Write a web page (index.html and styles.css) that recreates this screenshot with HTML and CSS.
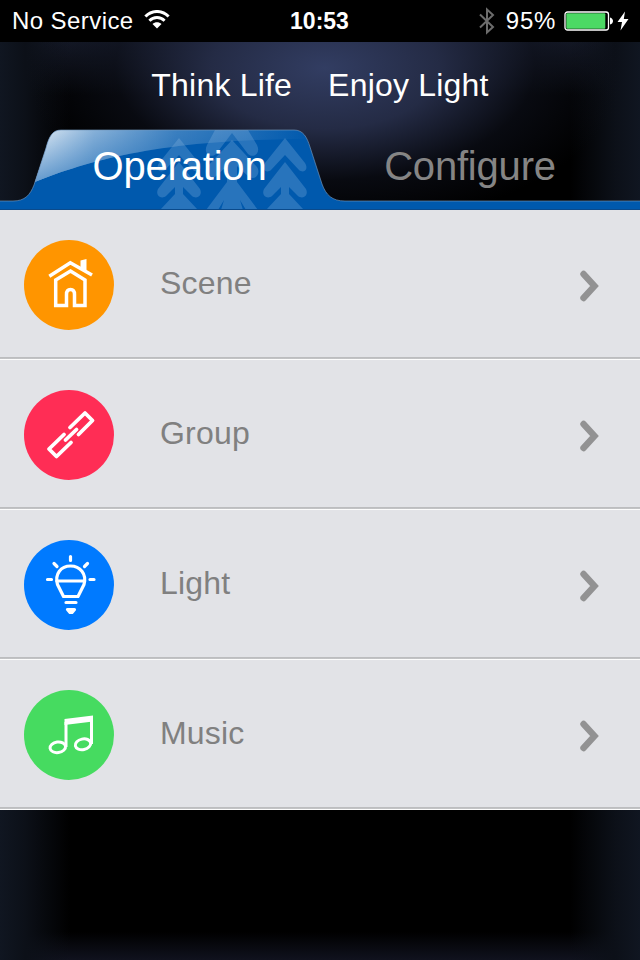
FILE: index.html
```
<!DOCTYPE html>
<html lang="en">
<head>
  <meta charset="UTF-8">
  <meta name="viewport" content="width=device-width, initial-scale=1.0">
  <title>Think Life Enjoy Light</title>
  <link rel="stylesheet" href="styles.css">
</head>
<body>

  <!-- Status bar -->
  <div class="status-bar">
    <div class="status-left">
      <span class="carrier">No Service</span>
      <svg class="wifi" width="26" height="20" viewBox="0 0 26 20">
        <path d="M1.400 6.500C8-.2 18-.2 24.600 6.500" fill="none" stroke="#fff" stroke-width="3"/>
        <path d="M5.400 10.700C9.600 6.500 16.400 6.500 20.600 10.700" fill="none" stroke="#fff" stroke-width="2.900"/>
        <path d="M8.500 14.100C11 11.700 15 11.700 17.500 14.100L13 18.600Z" fill="#fff"/>
      </svg>
    </div>
    <span class="clock">10:53</span>
    <div class="status-right">
      <svg class="bluetooth" width="16" height="28" viewBox="0 0 16 28">
        <path d="M1 7.500L14 20L8 25.500V2.500L14 8L1 20.500" fill="none" stroke="#6c6c6c" stroke-width="2"/>
      </svg>
      <span class="percent">95%</span>
      <svg class="battery" width="50" height="20" viewBox="0 0 50 20">
        <rect x="1" y="1" width="43.500" height="18" rx="2.500" fill="#000" stroke="#fff" stroke-width="1.300"/>
        <rect x="2.300" y="2.300" width="39" height="15.400" rx="1" fill="#4cd964"/>
        <path d="M46 6.500C50 7.500 50 12.500 46 13.500Z" fill="#fff"/>
      </svg>
      <svg class="bolt" width="12" height="20" viewBox="0 0 12 20">
        <path d="M8 .5L.5 11H5L3.500 19.500L11.500 8H6.800Z" fill="#fff"/>
      </svg>
    </div>
  </div>

  <!-- Header -->
  <header class="header">
    <h1><span>Think Life</span><span>Enjoy Light</span></h1>
    <nav class="tabs">
      <svg class="tab-shape" width="640" height="82" viewBox="0 0 640 82">
        <defs>
          <linearGradient id="gloss" x1="40" y1="10" x2="310" y2="20" gradientUnits="userSpaceOnUse">
            <stop offset="0" stop-color="#fff" stop-opacity=".88"/>
            <stop offset=".2" stop-color="#fff" stop-opacity=".54"/>
            <stop offset=".5" stop-color="#fff" stop-opacity=".24"/>
            <stop offset="1" stop-color="#fff" stop-opacity="0"/>
          </linearGradient>
          <linearGradient id="shade" x1="0" y1="0" x2="0" y2="1">
            <stop offset="0" stop-color="#0059ad" stop-opacity="0"/>
            <stop offset="1" stop-color="#0059ad" stop-opacity=".6"/>
          </linearGradient>
          <clipPath id="tabClip">
            <path d="M0 73H13C25 73 30 67 34 57L46 20C49 9 52 2 61 2H294C303 2 307 9 310 19L322 56C326 67 332 73 345 73H640V82H0Z"/>
          </clipPath>
        </defs>
        <g clip-path="url(#tabClip)">
          <rect width="640" height="82" fill="#0059ad"/>
          <!-- pine trees -->
          <g fill="#2874bc">
            <path id="tree" d="M285 10L305 35C309 41 304 46 299 42L285 27L271 42C266 46 261 41 265 35ZM285 34L306 61C309 67 303 72 298 68L289 59V66L304 82H266L281 66V59L272 68C267 72 261 67 264 61Z"/>
            <use href="#tree" x="-106"/>
            <path d="M215 2H248L257 17C261 25 254 31 248 26L232 5L216 26C210 31 203 25 207 17Z"/>
            <path d="M232 12L257 39C261 45 256 53 249 49L237 38V54L258 82H246L240 72L243 82H221L224 72L218 82H206L227 54V38L215 49C208 53 203 45 207 39Z"/>
          </g>
          <path d="M25 58C85 33 160 11 310 11V0H25Z" fill="url(#gloss)"/>
          <path d="M25 58C85 33 160 11 310 11V0H25Z" fill="url(#shade)"/>
        </g>
        <path d="M0 73H13C25 73 30 67 34 57L46 20C49 9 52 2 61 2H294C303 2 307 9 310 19L322 56C326 67 332 73 345 73H640" fill="none" stroke="#7397bd" stroke-opacity=".65"/>
        <path d="M0 81.500H640" stroke="#0b4a8b"/>
      </svg>
      <a class="tab active">Operation</a>
      <a class="tab">Configure</a>
    </nav>
  </header>

  <!-- Menu -->
  <ul class="menu">
    <li>
      <svg class="icon" width="90" height="90" viewBox="0 0 90 90">
        <circle cx="45" cy="45" r="45" fill="#ff9500"/>
        <g fill="none" stroke="#fff" stroke-width="3.500">
          <path d="M25.300 36.200L46.300 22.700L68 35"/>
          <path d="M31.700 40V65.500H42.500V54.500Q42.500 49.500 46.500 49.500Q50.500 49.500 50.500 54.500V65.500H61V40L46.500 31Z"/>
        </g>
        <path d="M56.500 20.500L62.500 19V33L56.500 29.500Z" fill="#fff"/>
      </svg>
      <span class="label">Scene</span>
      <svg class="arrow" width="22" height="32" viewBox="0 0 22 32"><path d="M4.500 4L15.500 16L4.500 28" fill="none" stroke="#929293" stroke-width="6.400" stroke-linecap="round"/></svg>
    </li>
    <li>
      <svg class="icon" width="90" height="90" viewBox="0 0 90 90">
        <circle cx="45" cy="45" r="45" fill="#ff2d55"/>
        <g fill="none" stroke="#fff" stroke-width="3.800" stroke-linecap="round" stroke-linejoin="round">
          <path d="M46 37.500L61 23L68.500 30.500L54.500 44.500"/>
          <path d="M40 44.500L25 59L32.500 66.500L47 52.500"/>
          <path d="M41.500 50L52.500 39.500"/>
        </g>
      </svg>
      <span class="label">Group</span>
      <svg class="arrow" width="22" height="32" viewBox="0 0 22 32"><path d="M4.500 4L15.500 16L4.500 28" fill="none" stroke="#929293" stroke-width="6.400" stroke-linecap="round"/></svg>
    </li>
    <li>
      <svg class="icon" width="90" height="90" viewBox="0 0 90 90">
        <circle cx="45" cy="45" r="45" fill="#007aff"/>
        <g fill="none" stroke="#fff" stroke-width="3.200" stroke-linecap="round" stroke-linejoin="round">
          <path d="M39.500 56.500L33.500 44.500C30.500 34 37 26 46.500 26S63 34 60 44.500L54 56.500Z"/>
          <path d="M33 41H60M42 62.500H52M46.500 16.500V20.500M30 23.500L33 26.500M63.500 23.500L60.500 26.500M23.500 39.500H27.500M66 39.500H70"/>
          <path d="M43.500 69.500H50.500L48 72.500H46Z" fill="#fff"/>
        </g>
      </svg>
      <span class="label">Light</span>
      <svg class="arrow" width="22" height="32" viewBox="0 0 22 32"><path d="M4.500 4L15.500 16L4.500 28" fill="none" stroke="#929293" stroke-width="6.400" stroke-linecap="round"/></svg>
    </li>
    <li>
      <svg class="icon" width="90" height="90" viewBox="0 0 90 90">
        <circle cx="45" cy="45" r="45" fill="#46db60"/>
        <g fill="none" stroke="#fff" stroke-width="3">
          <ellipse cx="33.800" cy="57.300" rx="7.800" ry="5.300" transform="rotate(-8 33.800 57.300)"/>
          <ellipse cx="59" cy="54.300" rx="7.800" ry="5.300" transform="rotate(-12 59 54.300)"/>
          <path d="M42 57V32M67.500 54V29"/>
        </g>
        <path d="M40.500 29L69 25.500V31.500L40.500 35Z" fill="#fff"/>
      </svg>
      <span class="label">Music</span>
      <svg class="arrow" width="22" height="32" viewBox="0 0 22 32"><path d="M4.500 4L15.500 16L4.500 28" fill="none" stroke="#929293" stroke-width="6.400" stroke-linecap="round"/></svg>
    </li>
  </ul>

</body>
</html>
```
FILE: styles.css
```
body {
  font-family: "Liberation Sans", Arial, sans-serif;
  margin: 0;
  padding: 0;
  height: 960px;
  overflow: hidden;
  background:
    radial-gradient(ellipse 300px 160px at 325px 68px, #323d62 0%, #242b45 38%, rgba(14, 17, 28, 0.6) 70%, transparent 100%),
    linear-gradient(to right, #101621 0, #0c1018 25px, transparent 70px, transparent 570px, #0c1018 615px, #101621 640px),
    linear-gradient(to top, #10121e 0, transparent 28px),
    linear-gradient(to bottom, #151a28 42px, transparent 95px),
    #000;
}

.status-bar {
  display: grid;
  grid-template-columns: 1fr auto 1fr;
  align-items: center;
  height: 42px;
  padding: 0 11px 0 12px;
  box-sizing: border-box;
  background-color: #000;
  color: #fff;
  font-size: 24px;
}

.status-left, .status-right {
  display: flex;
  align-items: center;
}

.status-right {
  justify-content: flex-end;
}

.carrier {
  letter-spacing: 0.42px;
}

.wifi {
  margin-left: 10px;
  margin-top: -2px;
}

.clock {
  margin-left: -2px;
  font-size: 23px;
  font-weight: bold;
}

.percent {
  margin-left: 11px;
  letter-spacing: 0.7px;
}

.battery {
  margin-left: 8px;
}

.bolt {
  margin-left: 3px;
}

.header {
  height: 168px;
}

h1 {
  display: flex;
  justify-content: center;
  gap: 36px;
  height: 86px;
  margin: 0;
  color: #fff;
  font-size: 32px;
  font-weight: normal;
  line-height: 86px;
  letter-spacing: 0.2px;
}

.tabs {
  position: relative;
  display: flex;
  height: 82px;
}

.tab-shape {
  position: absolute;
  left: 0;
  top: 0;
}

.tab {
  position: relative;
  width: 256px;
  color: #858585;
  font-size: 40px;
  line-height: 77px;
  text-align: center;
  letter-spacing: -0.2px;
}

.tab.active {
  width: 325px;
  padding-left: 17px;
  color: #fff;
}

.menu {
  list-style-type: none;
  margin: 0;
  padding: 0;
}

.menu li {
  display: flex;
  align-items: center;
  height: 150px;
  padding: 0 39px 0 24px;
  box-sizing: border-box;
  background: linear-gradient(to bottom, #e2e3e7 147px, #b9babc 147px, #c4c5c7 149px, #fcfcfc 149px);
}

.label {
  flex: 1;
  margin-left: 46px;
  margin-top: -4px;
  color: #808080;
  font-size: 32px;
  letter-spacing: 0.2px;
}

.arrow {
  margin-top: 2px;
}
```
